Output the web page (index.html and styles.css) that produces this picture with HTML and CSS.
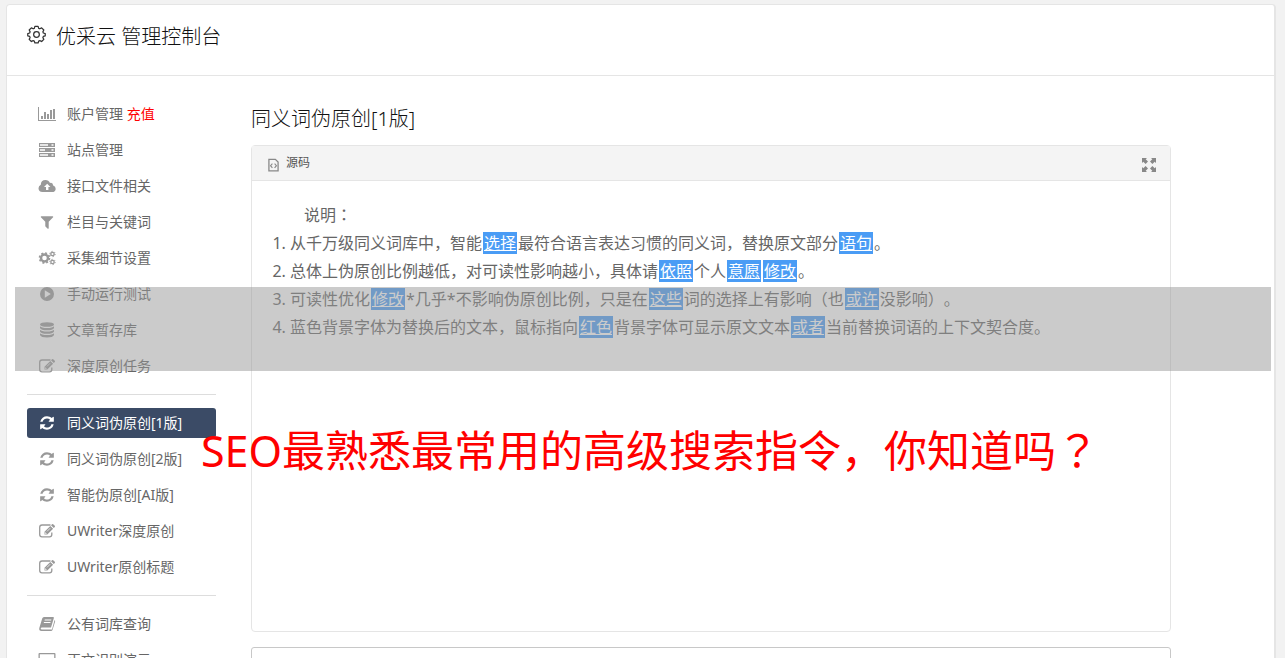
FILE: index.html
```html
<!DOCTYPE html>
<html lang="zh-CN">
<head>
<meta charset="utf-8">
<title>优采云 管理控制台</title>
<link rel="stylesheet" href="styles.css">
</head>
<body>
<svg class="sprite" aria-hidden="true">
  <symbol id="refresh" viewBox="0 0 1536 1792"><path d="M1511 1056q0 5-1 7-64 268-268 434.5t-478 166.5q-146 0-282.5-55t-243.5-157l-129 129q-19 19-45 19t-45-19-19-45v-448q0-26 19-45t45-19h448q26 0 45 19t19 45-19 45l-137 137q71 66 161 102t187 36q134 0 250-65t186-179q11-17 53-117 8-23 30-23h192q13 0 22.5 9.5t9.5 22.5zm25-800v448q0 26-19 45t-45 19h-448q-26 0-45-19t-19-45 19-45l138-138q-148-137-349-137-134 0-250 65t-186 179q-11 17-53 117-8 23-30 23h-199q-13 0-22.5-9.5t-9.5-22.5v-7q65-268 270-434.5t480-166.5q146 0 284 55.5t245 156.5l130-129q19-19 45-19t45 19 19 45z"/></symbol>
  <symbol id="edit" viewBox="0 0 18 16"><path d="M12.5 2H4Q1.7 2 1.7 4.300v7.200Q1.700 13.800 4 13.800h7.500q2.300 0 2.300-2.300V9.500" fill="none" stroke="currentColor" stroke-width="1.300"/><path d="M6.500 11.500V8.700L12.300 2.900l2.800 2.800-5.800 5.800zM13 2.200l1-1q.6-.5 1.200 0l1.600 1.600q.5.6 0 1.200l-1 1z"/><path d="M7.300 9.300v1.400h1.400M9 8.400l3.200-3.200" fill="none" stroke="#fff" stroke-width=".7"/></symbol>
</svg>
<div class="shell">
  <header class="topbar">
    <svg class="gear" viewBox="0 0 20 20" fill="none" stroke="currentColor" stroke-width="1.300"><circle cx="10" cy="10" r="3"/><path d="M8.300 1.500h3.400l.6 2 1.200.5 1.900-1 2.300 2.300-1 1.900.5 1.200 2 .6v2.400l-2 .6-.5 1.200 1 1.900-2.300 2.300-1.900-1-1.200.5-.6 2H8.300l-.6-2-1.200-.5-1.900 1-2.300-2.300 1-1.900-.5-1.200-2-.6V9l2-.6.5-1.200-1-1.900 2.300-2.300 1.900 1 1.200-.5z" stroke-linejoin="round"/></svg>
    <h1>优采云 管理控制台</h1>
  </header>
  <div class="columns">
    <nav class="sidebar">
      <ul class="group">
        <li><a href="#"><svg viewBox="0 0 20 16"><path d="M1 1h1v13h17v1H1zM4 10h2v3H4zM7 6h2v7H7zM10 8h2v5h-2zM13 4h2v9h-2zM16 3h2v10h-2z"/></svg>账户管理 <span class="recharge">充值</span></a></li>
        <li><a href="#"><svg viewBox="0 0 18 16"><path fill-rule="evenodd" d="M1 1h16v4H1zM2 2.300v1.400h8V2.300zM13.500 2.300v1.400h2V2.300zM1 6h16v4H1zM2 7.300v1.400h5V7.300zM13.500 7.300v1.400h2V7.300zM1 11h16v4H1zM2 12.300v1.400h8v-1.400zM13.500 12.300v1.400h2v-1.400z"/></svg>站点管理</a></li>
        <li><a href="#"><svg viewBox="0 0 18 16"><path fill-rule="evenodd" d="M4.500 14Q.5 14 .5 10.300q0-2.400 2.300-3.600Q2.800 2 7.500 2q3.200 0 4.500 3 2.800-.8 3.200 2.600 2.500.8 2.500 3.300Q17.500 14 14 14zM8 12h2.400V9h2L9.200 5.700 6 9h2z"/></svg>接口文件相关</a></li>
        <li><a href="#"><svg viewBox="0 0 1792 1792"><path d="M1595 295q17 41-14 70l-493 493v742q0 42-39 59-13 5-25 5-27 0-45-19l-256-256q-19-19-19-45v-486l-493-493q-31-29-14-70 17-39 59-39h1280q42 0 59 39z"/></svg>栏目与关键词</a></li>
        <li><a href="#"><svg viewBox="0 0 18 16" fill="none" stroke="currentColor"><circle cx="6.500" cy="8" r="3.500" stroke-width="2.400"/><circle cx="6.500" cy="8" r="5" stroke-width="1.600" stroke-dasharray="2 1.927"/><circle cx="14.500" cy="4" r="1.700" stroke-width="1.300"/><circle cx="14.500" cy="4" r="2.700" stroke-width="1" stroke-dasharray="1.200 1.627"/><circle cx="14.500" cy="12" r="1.700" stroke-width="1.300"/><circle cx="14.500" cy="12" r="2.700" stroke-width="1" stroke-dasharray="1.200 1.627"/></svg>采集细节设置</a></li>
        <li><a href="#"><svg viewBox="0 0 18 16"><path fill-rule="evenodd" d="M9 1a7 7 0 1 0 0 14A7 7 0 1 0 9 1zM6.800 4.300v7.400l6-3.700z"/></svg>手动运行测试</a></li>
        <li><a href="#"><svg viewBox="0 0 18 16"><ellipse cx="9" cy="2.500" rx="7" ry="2.300"/><path d="M2 4.200q1.500 1.800 7 1.800t7-1.800V6q-1 2.300-7 2.300T2 6zM2 7.700q1.500 1.800 7 1.800t7-1.800v1.800q-1 2.300-7 2.300T2 9.500zM2 11.200q1.500 1.800 7 1.800t7-1.800V13q-1 2.500-7 2.500T2 13z"/></svg>文章暂存库</a></li>
        <li><a href="#"><svg><use href="#edit"/></svg>深度原创任务</a></li>
      </ul>
      <ul class="group">
        <li><a class="active" href="#"><svg><use href="#refresh"/></svg>同义词伪原创[1版]</a></li>
        <li><a href="#"><svg><use href="#refresh"/></svg>同义词伪原创[2版]</a></li>
        <li><a href="#"><svg><use href="#refresh"/></svg>智能伪原创[AI版]</a></li>
        <li><a href="#"><svg><use href="#edit"/></svg>UWriter深度原创</a></li>
        <li><a href="#"><svg><use href="#edit"/></svg>UWriter原创标题</a></li>
      </ul>
      <ul class="group">
        <li><a href="#"><svg viewBox="0 0 18 16"><path fill-rule="evenodd" d="M6 1h9q1.200 0 .8 1.300L13 11.500H4q-1.300 0-1.300 1t1.300 1h10L16.600 4q.8.600.5 1.600L14.500 14q-.4 1-1.500 1H3.500Q.7 15 1.300 12L4.200 2.500Q4.700 1 6 1zM6.800 3.500l-.3 1h6.600l.3-1zM6 6l-.3 1h6.600l.3-1z"/></svg>公有词库查询</a></li>
        <li><a href="#"><svg viewBox="0 0 18 16"><path d="M1.500 1h15q1 0 1 1v10q0 1-1 1H11l.5 2h-5l.5-2H1.500q-1 0-1-1V2q0-1 1-1zm.3 1.300v7.700h14.400V2.300z" fill-rule="evenodd"/></svg>正文识别演示</a></li>
      </ul>
    </nav>
    <main class="content">
      <h2>同义词伪原创[1版]</h2>
      <section class="editor">
        <div class="toolbar">
          <button type="button"><svg class="source-icon" viewBox="0 0 12 14" fill="none" stroke="currentColor"><path d="M1 .8h7l3 3v9.500H1z" stroke-width="1.400"/><path d="M4.800 5.500L2.800 7.800l2 2.300M7.200 5.500l2 2.300-2 2.300" stroke-width="1.200"/></svg>源码</button>
          <button type="button" aria-label="全屏"><svg class="expand-icon" viewBox="0 0 14 14"><path d="M0 0h5L3.700 1.300 6 3.600 3.600 6 1.300 3.700 0 5zM14 0v5l-1.300-1.300L10.400 6 8 3.600l2.300-2.300L9 0zM0 14V9l1.300 1.300L3.600 8 6 10.400l-2.300 2.300L5 14zM14 14H9l1.300-1.300L8 10.400 10.400 8l2.300 2.300L14 9z"/></svg></button>
        </div>
        <div class="document">
          <p>说明<span class="punct" lang="zh-TW">：</span></p>
          <ol>
            <li>从千万级同义词库中，智能<u>选择</u>最符合语言表达习惯的同义词，替换原文部分<u>语句</u>。</li>
            <li>总体上伪原创比例越低，对可读性影响越小，具体请<u>依照</u>个人<u>意愿</u><u>修改</u>。</li>
            <li>可读性优化<u>修改</u>*几乎*不影响伪原创比例，只是在<u>这些</u>词的选择上有影响（也<u>或许</u>没影响）。</li>
            <li>蓝色背景字体为替换后的文本，鼠标指向<u>红色</u>背景字体可显示原文文本<u>或者</u>当前替换词语的上下文契合度。</li>
          </ol>
        </div>
      </section>
      <textarea class="source" aria-label="原文"></textarea>
    </main>
  </div>
</div>
<div class="band"></div>
<div class="headline">SEO最熟悉最常用的高级搜索指令，你知道吗<span class="punct" lang="zh-TW">？</span></div>
</body>
</html>
```
FILE: styles.css
```css
* { box-sizing: border-box; }
body {
  margin: 0;
  height: 100vh;
  overflow: hidden;
  position: relative;
  background: #f2f2f2;
  color: #666;
  font: 14px/20px "Noto Sans", "Noto Sans CJK SC", sans-serif;
  text-spacing-trim: space-all;
}
h1, h2, p, ul, ol { margin: 0; padding: 0; }
h1, h2 { font-size: 20px; line-height: 28px; font-weight: 300; color: #111; }
.sprite { position: absolute; width: 0; height: 0; }
.punct { font-family: "Noto Sans", "Noto Sans CJK TC", sans-serif; }
.shell {
  margin: 4px 9px 0 6px;
  background: #fff;
  border: 1px solid #e5e5e5;
  border-right-width: 2px;
  border-radius: 4px 4px 0 0;
}
.topbar {
  display: flex;
  gap: 10px;
  padding: 18px 20px 24px;
  border-bottom: 1px solid #e5e5e5;
}
.gear { width: 19px; height: 19px; margin-top: 2px; color: #333; }
.columns { display: flex; gap: 35px; padding: 23px 20px 0; }
.sidebar { flex: 0 0 189px; }
.group { display: grid; gap: 6px; list-style: none; }
.group + .group { margin-top: 13px; padding-top: 13px; border-top: 1px solid #ddd; }
.sidebar a {
  display: block;
  padding: 5px 0 5px 10px;
  border-radius: 3px;
  color: #666;
  text-decoration: none;
  white-space: nowrap;
}
.sidebar svg {
  width: 20px;
  height: 16px;
  margin-right: 10px;
  vertical-align: -3px;
  fill: currentColor;
  color: #999;
}
.sidebar svg[fill="none"] { fill: none; }
.sidebar .active { background: #3b4b66; color: #fff; }
.sidebar .active svg { color: #fff; }
.sidebar .recharge { color: #f00; }
.content { flex: 1 1 0; max-width: 920px; padding-top: 6px; }
.editor {
  margin-top: 12px;
  border: 1px solid #e5e5e5;
  border-radius: 4px;
}
.toolbar {
  display: flex;
  justify-content: space-between;
  padding: 7px 14px 7px 16px;
  background: #f4f4f4;
  border-bottom: 1px solid #e5e5e5;
}
.toolbar button {
  display: flex;
  align-items: center;
  gap: 7px;
  padding: 0;
  border: 0;
  background: none;
  color: #555;
  font: 12px/20px "Noto Sans", "Noto Sans CJK SC", sans-serif;
}
.toolbar svg { color: #888; margin-top: 3px; }
.source-icon { width: 11px; height: 14px; }
.expand-icon { width: 14px; height: 14px; fill: currentColor; }
.document {
  min-height: 450px;
  padding: 20px;
  font-size: 16px;
  line-height: 28px;
}
.document p { text-indent: 32px; }
.document ol { padding-left: 18px; }
.document u {
  margin: 0 1px;
  padding: 0 1px;
  background: #4a9cf5;
  color: #fff;
}
.source {
  display: block;
  width: 100%;
  height: 120px;
  margin-top: 15px;
  border: 1px solid #c8c8c8;
  border-radius: 3px;
  resize: none;
}
.band {
  position: absolute;
  top: 287px;
  left: 15px;
  right: 14px;
  height: 84px;
  background: rgba(151, 151, 151, 0.5);
}
.headline {
  position: absolute;
  top: 421px;
  left: 201px;
  color: #f00;
  font-size: 43px;
  line-height: 60px;
  white-space: nowrap;
}
```
